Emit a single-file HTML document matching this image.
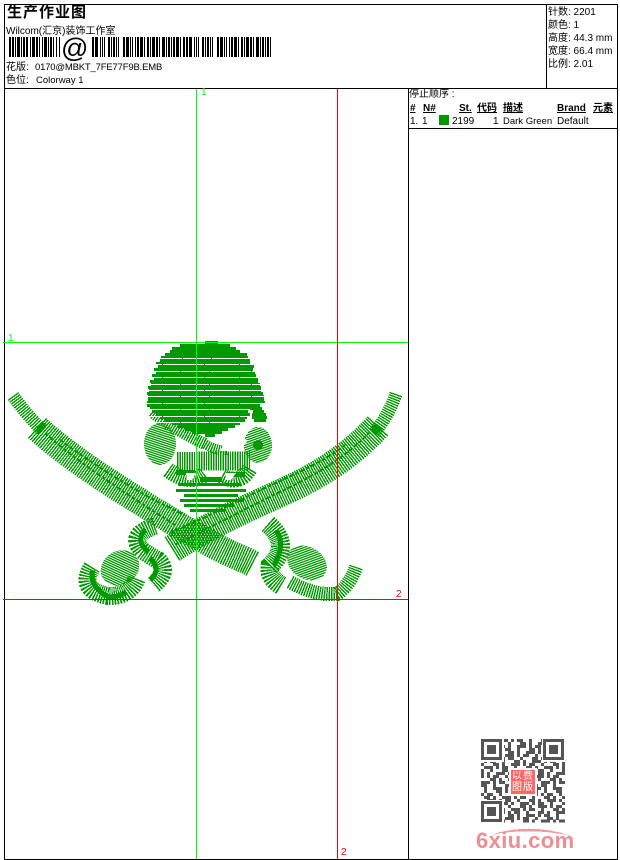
<!DOCTYPE html>
<html><head><meta charset="utf-8"><style>
html,body{margin:0;padding:0;background:#fff}
#p{position:relative;width:620px;height:860px;overflow:hidden;background:#fff}
.t{position:absolute;white-space:pre;font:10px/12px "Liberation Sans","WenQuanYi Zen Hei","Noto Sans CJK SC",sans-serif;color:#000}
.s{font-size:9.5px}
.b{font-weight:bold;text-decoration:underline}
svg{position:absolute;left:0;top:0}
</style></head><body><div id="p">
<svg width="620" height="860" shape-rendering="crispEdges">
<defs>
<pattern id="a" patternUnits="userSpaceOnUse" width="6" height="2.2" patternTransform="rotate(18)"><rect width="6" height="1.3" fill="#090"/></pattern>
<pattern id="c" patternUnits="userSpaceOnUse" width="6" height="2.2" patternTransform="rotate(-20)"><rect width="6" height="1.3" fill="#090"/></pattern>
<pattern id="d" patternUnits="userSpaceOnUse" width="6" height="2.2" patternTransform="rotate(55)"><rect width="6" height="1.3" fill="#090"/></pattern>
<pattern id="e" patternUnits="userSpaceOnUse" width="6" height="2.2" patternTransform="rotate(-50)"><rect width="6" height="1.3" fill="#090"/></pattern>
</defs>
<ellipse cx="160" cy="444" rx="16" ry="21" fill="url(#a)"/>
<ellipse cx="258" cy="445" rx="14" ry="18" fill="url(#c)"/>
<circle cx="258" cy="445" r="5" fill="#090"/>
<ellipse cx="120" cy="568" rx="20" ry="17" fill="url(#d)" transform="rotate(-30 120 568)"/>
<ellipse cx="307" cy="563" rx="21" ry="16" fill="url(#e)" transform="rotate(30 307 563)"/>
<g fill="none" stroke="#090">
<!-- blades -->
<g stroke-dasharray="1.4 1">
<path stroke-width="13" d="M13 396Q26 414 42 430"/>
<path stroke-width="27" d="M37 428C70 458 115 487 175 523S230 552 253 564"/>
<path stroke-width="13" d="M396 394Q389 415 374 433"/>
<path stroke-width="28" d="M378 426C350 456 320 475 285 491S215 522 172 549"/>
<!-- guards -->
<path stroke-width="19" d="M268 524Q292 545 270 566Q268 578 282 586"/>
<path stroke-width="14" d="M290 582Q315 596 337 594Q350 585 356 567"/>
<path stroke-width="18" d="M155 526Q128 535 142 550Q150 556 158 560Q170 572 153 585"/>
<path stroke-width="18" d="M92 567Q78 590 108 596Q130 597 137 578"/>
<!-- skull pieces -->
<path stroke-width="12" d="M152 412Q175 430 205 444"/>
<path stroke-width="19" d="M177 461H250"/>
<path stroke-width="16" d="M168 470Q190 486 205 474M222 476Q240 486 250 468"/>
<path stroke-width="10" d="M205 444Q218 452 228 450"/>
</g>
<!-- darker stitch cores -->
<g stroke-dasharray="4 2">
<path stroke-width="2" d="M45 433C75 460 120 490 175 525"/>
<path stroke-width="2" d="M60 440C95 465 140 495 185 515"/>
<path stroke-width="2" d="M370 432C345 458 315 475 280 492S215 525 175 545"/>
<path stroke-width="2" d="M345 445C320 465 280 480 240 500S190 525 170 532"/>
</g>
<g stroke-width="5">
<path d="M276 530Q286 545 274 565M145 530Q135 540 148 552M150 558Q162 570 150 580M93 570Q88 585 108 597Q120 597 126 592"/>
</g>
<!-- skull cap rows -->
<path stroke-width="3" d="M205 342.5H218M180 345.5H230M172 348.5H236M170 351.5H240M165 354.5H247M161 357.5H248M160 360.5H250M156 363.5H250M158 366.5H254M154 369.5H253M156 372.5H255M152 375.5H256M154 378.5H258M150 381.5H258M151 384.5H260M148 387.5H261M149 390.5H261M147 393.5H263M148 396.5H264M148 399.5H264M147 402.5H265M147 405.5H260M150 408.5H262M152 411.5H248M253 411.5H264M156 414.5H250M252 414.5H266M160 417.5H247M252 417.5H267M165 420.5H245M254 420.5H266M172 423.5H240M178 426.5H235M185 429.5H228M192 432.5H222M205 435.5H215"/>
<!-- lower teeth -->
<path stroke-width="3" d="M178 484.5H240M176 490.5H246M184 495.5H238M180 500.5H244M184 505.5H234M190 510.5H225"/>
<path stroke-width="5" d="M176 472.5H195M226 474.5H245M200 479.5H222"/>
</g>
<g fill="none" stroke="#fff">
<path d="M148 358.5H258M146 371.5H260M146 384.5H260M146 396.5H264M146 409.5H250M146 422.5H245" stroke-dasharray="34 1 28 1 41 1"/>
<path d="M146 364.5H260M146 377.5H260M146 390.5H262M146 403.5H266M146 416.5H250" stroke-dasharray="34 1 28 1 41 1" stroke-dashoffset="47"/>
</g>
<!-- eye / nose gaps -->
<path fill="#fff" d="M180 441L197 452H174ZM226 440H248L240 451H220ZM186 473H196L192 480H187ZM226 473H236L231 480H225Z"/>
<!-- frame -->
<g fill="#000">
<rect x="4" y="4" width="614" height="1"/><rect x="4" y="88" width="614" height="1"/>
<rect x="4" y="859" width="614" height="1"/><rect x="4" y="4" width="1" height="856"/>
<rect x="617" y="4" width="1" height="856"/><rect x="408" y="88" width="1" height="771"/>
<rect x="546" y="4" width="1" height="84"/><rect x="408" y="128" width="210" height="1"/>
</g>
<!-- grid -->
<rect x="196" y="89" width="1" height="770" fill="#0f0"/>
<rect x="3" y="342" width="405" height="1" fill="#0f0"/>
<rect x="337" y="89" width="1" height="770" fill="#f00"/>
<rect x="3" y="599" width="405" height="1" fill="#f00"/>
<!-- barcode -->
<g fill="none" stroke="#000" stroke-width="20">
<path d="M9 47H61" stroke-dasharray="2 1 2 1 1 1 3 1 1 1 2 1 2 2 1 1 3 1 2 1 1 2 1 1 3 1 1 1 2 1 1"/>
<path d="M92 47H271" stroke-dasharray="2 1 3 2 1 1 1 1 1 3 2 1 1 1 2 1 1 1 1 4 2 1 3 1 1 1 1 2 1 1 2 1 3 1 1 2 2 1 1 1 3 1 2 1 1 2 3 1 1 1 2 1 1 1 2 1 3 1 1 2 2 1"/>
</g>
<!-- swatch -->
<rect x="439" y="115" width="10" height="10" fill="#090"/>
<!-- QR -->
<g fill="none" stroke="#555" stroke-width="3" stroke-dasharray="6 3 3 6 9 3 3 3 6 6 3 9">
<path d="M481 740.5H565"/><path d="M481 743.5H565" stroke-dashoffset="21"/><path d="M481 746.5H565" stroke-dashoffset="42"/><path d="M481 749.5H565" stroke-dashoffset="12"/><path d="M481 752.5H565" stroke-dashoffset="33"/><path d="M481 755.5H565" stroke-dashoffset="54"/><path d="M481 758.5H565" stroke-dashoffset="9"/><path d="M481 761.5H565" stroke-dashoffset="27"/><path d="M481 764.5H565" stroke-dashoffset="48"/><path d="M481 767.5H565" stroke-dashoffset="15"/><path d="M481 770.5H565" stroke-dashoffset="39"/><path d="M481 773.5H565" stroke-dashoffset="3"/><path d="M481 776.5H565" stroke-dashoffset="24"/><path d="M481 779.5H565" stroke-dashoffset="51"/><path d="M481 782.5H565" stroke-dashoffset="18"/><path d="M481 785.5H565" stroke-dashoffset="36"/><path d="M481 788.5H565" stroke-dashoffset="6"/><path d="M481 791.5H565" stroke-dashoffset="45"/><path d="M481 794.5H565" stroke-dashoffset="30"/><path d="M481 797.5H565" stroke-dashoffset="57"/><path d="M481 800.5H565" stroke-dashoffset="12"/><path d="M481 803.5H565" stroke-dashoffset="39"/><path d="M481 806.5H565" stroke-dashoffset="21"/><path d="M481 809.5H565" stroke-dashoffset="48"/><path d="M481 812.5H565" stroke-dashoffset="3"/><path d="M481 815.5H565" stroke-dashoffset="33"/><path d="M481 818.5H565" stroke-dashoffset="54"/><path d="M481 821H565" stroke-dashoffset="18"/>
</g>
<g>
<rect x="480" y="738" width="24" height="24" fill="#fff"/><rect x="542" y="738" width="24" height="24" fill="#fff"/><rect x="480" y="800" width="24" height="24" fill="#fff"/>
<g fill="none" stroke="#555" stroke-width="3"><rect x="482.5" y="740.5" width="18" height="18"/><rect x="544.5" y="740.5" width="18" height="18"/><rect x="482.5" y="802.5" width="18" height="18"/></g>
<g fill="#555"><rect x="487" y="745" width="9" height="9"/><rect x="549" y="745" width="9" height="9"/><rect x="487" y="807" width="9" height="9"/></g>
<rect x="509" y="768" width="28" height="28" fill="#fff"/><rect x="511" y="770" width="24" height="24" fill="#f66"/>
</g>
<!-- logo swoosh -->
<path d="M490 835Q530 822 572 836Q530 827 490 835Z" fill="#ef9a9f"/>
</svg>
<div class="t" style="left:7px;top:4px;font-size:15px;line-height:17px;font-weight:bold;letter-spacing:1px">生产作业图</div>
<div class="t" style="left:6px;top:26px">Wilcom(汇京)装饰工作室</div>
<div class="t" style="left:61px;top:33px;font-size:27px;line-height:30px">@</div>
<div class="t" style="left:6px;top:62px">花版:</div>
<div class="t s" style="left:35px;top:62px;letter-spacing:-.18px">0170@MBKT_7FE77F9B.EMB</div>
<div class="t" style="left:6px;top:75px">色位:</div>
<div class="t s" style="left:36px;top:75px">Colorway 1</div>
<div class="t" style="left:548px;top:7px">针数: 2201</div>
<div class="t" style="left:548px;top:20px">颜色: 1</div>
<div class="t" style="left:548px;top:33px">高度: 44.3 mm</div>
<div class="t" style="left:548px;top:46px">宽度: 66.4 mm</div>
<div class="t" style="left:548px;top:59px">比例: 2.01</div>
<div class="t" style="left:409px;top:89px">停止顺序 :</div>
<div class="t b" style="left:410px;top:103px">#</div>
<div class="t b" style="left:423px;top:103px">N#</div>
<div class="t b" style="left:459px;top:103px">St.</div>
<div class="t b" style="left:477px;top:103px">代码</div>
<div class="t b" style="left:503px;top:103px">描述</div>
<div class="t b" style="left:557px;top:103px">Brand</div>
<div class="t b" style="left:593px;top:103px">元素</div>
<div class="t" style="left:410px;top:116px">1.</div>
<div class="t" style="left:422px;top:116px">1</div>
<div class="t" style="left:452px;top:116px">2199</div>
<div class="t" style="left:493px;top:116px">1</div>
<div class="t s" style="left:503px;top:116px">Dark Green</div>
<div class="t" style="left:557px;top:116px">Default</div>
<div class="t" style="left:201px;top:87px;color:#0f0">1</div>
<div class="t" style="left:8px;top:333px;color:#0f0">1</div>
<div class="t" style="left:396px;top:589px;color:#f00">2</div>
<div class="t" style="left:341px;top:847px;color:#f00">2</div>
<div class="t" style="left:512px;top:771px;width:24px;font-size:10px;line-height:11px;color:#fff;white-space:normal;letter-spacing:1px">以费图版</div>
<div class="t" style="left:476px;top:829px;font-size:22px;line-height:24px;font-weight:bold;letter-spacing:.4px;color:#ee8d92">6xiu.com</div>
</div></body></html>
